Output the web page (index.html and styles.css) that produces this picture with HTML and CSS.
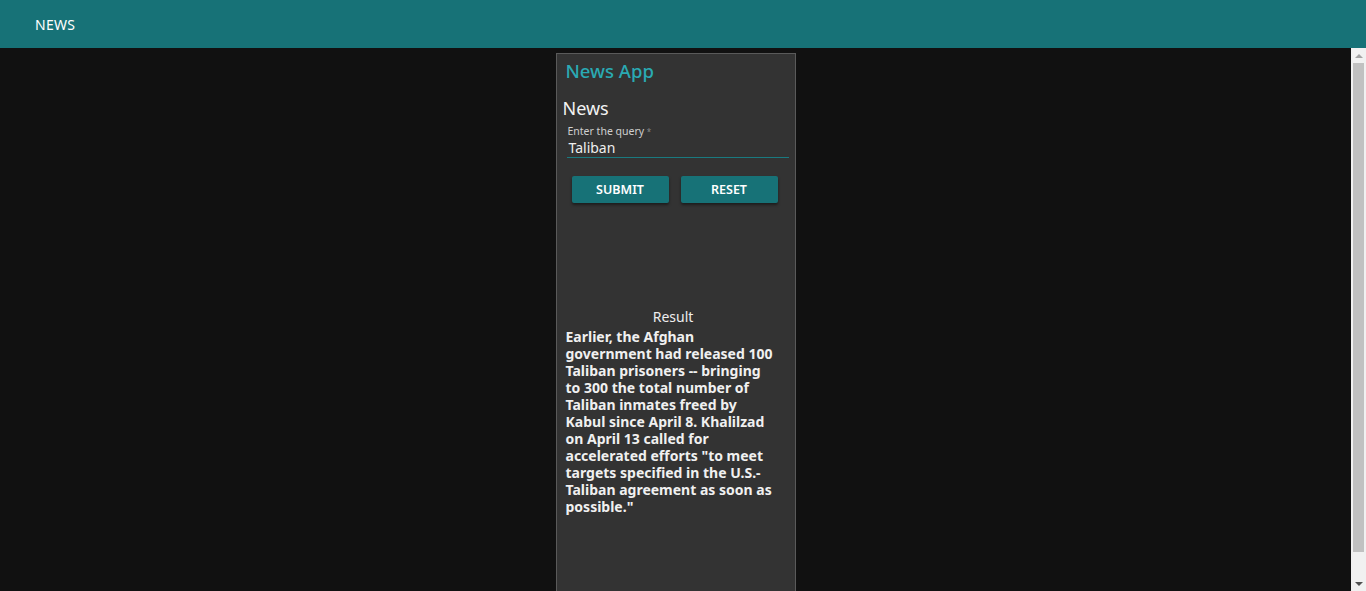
FILE: index.html
```html
<!DOCTYPE html>
<html>
<head>
<meta charset="utf-8">
<link rel="stylesheet" href="styles.css">
</head>
<body>
<header class="topbar"><span class="brand">NEWS</span></header>
<div class="main">
  <main class="viewport">
    <section class="card">
      <h1 class="app-title">News App</h1>
      <h2 class="section-title">News</h2>
      <div class="field">
        <label class="field-label">Enter the query <span class="req">*</span></label>
        <div class="field-value">Taliban</div>
      </div>
      <div class="actions">
        <button class="btn">SUBMIT</button>
        <button class="btn">RESET</button>
      </div>
      <div class="result-title">Result</div>
      <p class="result-text">Earlier, the Afghan government had released 100 Taliban prisoners -- bringing to 300 the total number of Taliban inmates freed by Kabul since April 8. Khalilzad on April 13 called for accelerated efforts "to meet targets specified in the U.S.-Taliban agreement as soon as possible."</p>
    </section>
  </main>
  <div class="scrollbar" aria-hidden="true">
    <div class="sb-btn"><svg width="8" height="4" viewBox="0 0 8 4"><polygon points="0,4 8,4 4,0" fill="#a3a3a3"/></svg></div>
    <div class="sb-track"><div class="sb-thumb"></div></div>
    <div class="sb-btn"><svg width="8" height="4" viewBox="0 0 8 4"><polygon points="0,0 8,0 4,4" fill="#505050"/></svg></div>
  </div>
</div>
</body>
</html>
```
FILE: styles.css
```css
* { box-sizing: border-box; }
html, body { margin: 0; height: 100%; }
body {
  display: flex;
  flex-direction: column;
  background: #111111;
  font-family: "Noto Sans", "Open Sans", sans-serif;
  color: #eeeeee;
  overflow: hidden;
}
.topbar {
  height: 48px;
  flex: none;
  background: #177277;
  display: flex;
  align-items: center;
  padding-left: 35px;
}
.brand {
  color: #ffffff;
  font-size: 14px;
  letter-spacing: 0.3px;
}
.main {
  flex: 1;
  display: flex;
  min-height: 0;
}
.viewport {
  flex: 1;
  overflow: hidden;
  display: flex;
  justify-content: center;
  padding-top: 5px;
}
.scrollbar {
  width: 15px;
  flex: none;
  background: #f1f1f1;
  display: flex;
  flex-direction: column;
}
.sb-btn {
  height: 15px;
  flex: none;
  display: flex;
  align-items: center;
  justify-content: center;
}
.sb-track {
  flex: 1;
  padding: 0 2px 24px 2px;
  display: flex;
}
.sb-thumb {
  flex: 1;
  background: #c1c1c1;
}
.card {
  width: 240px;
  min-height: 600px;
  background: #333333;
  border: 1px solid #5a5a5a;
  border-bottom: none;
  padding: 6px 6px 0 6px;
  flex: none;
}
.app-title {
  margin: 0 0 0 3px;
  font-size: 18.5px;
  font-weight: 500;
  color: #2aaab3;
  line-height: 22px;
}
.section-title {
  margin: 15px 0 0 0;
  font-size: 18px;
  font-weight: 400;
  color: #f2f2f2;
  line-height: 22px;
}
.field {
  margin: 6px 0 0 4px;
  border-bottom: 1px solid #1a7a80;
  padding-bottom: 0;
}
.field-label {
  display: block;
  font-size: 10.5px;
  color: #cfcfcf;
  line-height: 13px;
  padding-left: 1px;
}
.req { color: #888; font-size: 8px; vertical-align: top; }
.field-value {
  font-size: 14px;
  color: #eeeeee;
  line-height: 19px;
  padding-left: 2px;
}
.actions {
  display: flex;
  gap: 12px;
  margin: 18px 0 0 9px;
}
.btn {
  width: 97px;
  height: 27px;
  background: #177277;
  border: none;
  border-radius: 2px;
  color: #ffffff;
  font-family: inherit;
  font-size: 12.5px;
  font-weight: 600;
  box-shadow: 0 2px 3px rgba(0,0,0,0.45);
  padding: 0;
}
.result-title {
  margin-top: 105px;
  text-align: center;
  font-size: 14px;
  color: #eeeeee;
  line-height: 18px;
  padding-right: 5px;
}
.result-text {
  width: 210px;
  margin: 2px 0 0 3px;
  font-size: 14px;
  font-weight: 700;
  line-height: 17px;
  color: #f0f0f0;
}
```
